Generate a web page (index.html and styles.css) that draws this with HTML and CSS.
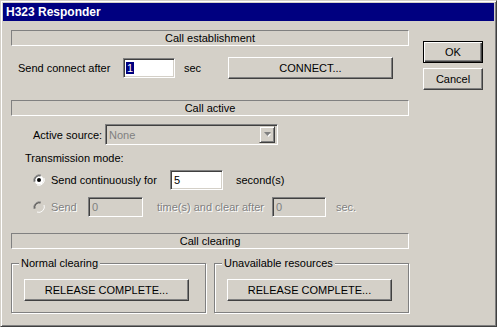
FILE: index.html
```html
<!DOCTYPE html>
<html lang="en">
<head>
    <meta charset="UTF-8">
    <title>H323 Responder</title>
    <link rel="stylesheet" href="styles.css">
</head>
<body>
    <div class="window">
        <div class="titlebar">H323 Responder</div>
        <div class="main">
            <div class="left">
                <div class="bar first">Call establishment</div>
                <div class="row row-connect">
                    <span class="lbl w-connect">Send connect after</span>
                    <div class="field w52"><span class="sel">1</span></div>
                    <span class="lbl unit">sec</span>
                    <button class="btn w165">CONNECT...</button>
                </div>

                <div class="bar second">Call active</div>
                <div class="row row-source">
                    <span class="lbl w-source">Active source:</span>
                    <div class="combo">
                        <span class="combo-text">None</span>
                        <span class="combo-btn">
                            <svg width="7" height="5" viewBox="0 0 7 5"><path d="M1 1h5l-2.5 3z" fill="#fff" transform="translate(1 1)"/><path d="M0 0h7l-3.5 4z" fill="#808080"/></svg>
                        </span>
                    </div>
                </div>
                <div class="caption">Transmission mode:</div>
                <div class="row row-radio">
                    <svg class="radio" width="12" height="12" viewBox="0 0 12 12">
                        <path d="M8 1.1A5.5 5.5 0 0 0 1.1 8" stroke="#808080" fill="none"/>
                        <path d="M11 4A5.5 5.5 0 0 1 4 11" stroke="#fff" fill="none"/>
                        <circle cx="6" cy="6" r="4.5" fill="#fff"/>
                        <path d="M7.5 1.9A4.5 4.5 0 0 0 1.9 7.5" stroke="#404040" fill="none"/>
                        <circle cx="6" cy="6" r="2" fill="#000"/>
                    </svg>
                    <span class="lbl w-cont">Send continuously for</span>
                    <div class="field w53">5</div>
                    <span class="lbl unit2">second(s)</span>
                </div>
                <div class="row row-radio2">
                    <svg class="radio" width="12" height="12" viewBox="0 0 12 12">
                        <path d="M8 1.1A5.5 5.5 0 0 0 1.1 8" stroke="#808080" fill="none"/>
                        <path d="M11 4A5.5 5.5 0 0 1 4 11" stroke="#fff" fill="none"/>
                        <circle cx="6" cy="6" r="4.5" fill="#d4d0c8"/>
                        <path d="M7.5 1.9A4.5 4.5 0 0 0 1.9 7.5" stroke="#404040" fill="none"/>
                    </svg>
                    <span class="lbl off w-send">Send</span>
                    <div class="field off-field w55">0</div>
                    <span class="lbl off w-times">time(s) and clear after</span>
                    <div class="field off-field w54">0</div>
                    <span class="lbl off unit3">sec.</span>
                </div>

                <div class="bar third">Call clearing</div>
                <div class="groups">
                    <div class="group">
                        <span class="legend">Normal clearing</span>
                        <button class="btn w165">RELEASE COMPLETE...</button>
                    </div>
                    <div class="group">
                        <span class="legend">Unavailable resources</span>
                        <button class="btn w165">RELEASE COMPLETE...</button>
                    </div>
                </div>
            </div>
            <div class="right">
                <button class="btn default">OK</button>
                <button class="btn cancel">Cancel</button>
            </div>
        </div>
    </div>
</body>
</html>
```

FILE: styles.css
```css
body {
    margin: 0;
    background-color: #d4d0c8;
    font-family: "Liberation Sans", Arial, sans-serif;
    font-size: 11px;
    color: #000;
}
.window {
    width: 497px;
    height: 327px;
    box-sizing: border-box;
    border: 1px solid;
    border-color: #d4d0c8 #404040 #404040 #d4d0c8;
    box-shadow: inset 1px 1px #fff, inset -1px -1px #808080;
    padding: 2px;
    background-color: #d4d0c8;
}
.titlebar {
    height: 18px;
    line-height: 18px;
    background-color: #000080;
    color: #fff;
    font-weight: bold;
    font-size: 12px;
    padding-left: 3px;
}
.main {
    display: flex;
    padding-left: 8px;
}
.left {
    width: 398px;
}
.right {
    margin-left: 14px;
    padding-top: 20px;
    display: flex;
    flex-direction: column;
}

/* section headers */
.bar {
    height: 16px;
    box-sizing: border-box;
    border: 1px solid;
    border-color: #808080 #fff #fff #808080;
    text-align: center;
    line-height: 14px;
}
.bar.first { margin-top: 9px; }
.bar.second { margin-top: 21px; }
.bar.third { margin-top: 16px; }

.row {
    display: flex;
    align-items: center;
}
.lbl { white-space: nowrap; }
.row-connect {
    height: 22px;
    margin-top: 11px;
    padding-left: 7px;
}
.w-connect { width: 105px; }
.unit { margin-left: 9px; width: 44px; }

.row-source {
    height: 21px;
    margin-top: 8px;
    padding-left: 22px;
}
.w-source { width: 72px; }
.caption {
    margin-top: 7px;
    padding-left: 14px;
    line-height: 13px;
}
.row-radio {
    height: 20px;
    margin-top: 5px;
    padding-left: 22px;
}
.row-radio2 {
    height: 20px;
    margin-top: 7px;
    padding-left: 22px;
}
.radio { flex: none; }
.w-cont { margin-left: 6px; width: 119px; }
.unit2 { margin-left: 13px; }
.w-send { margin-left: 6px; width: 37px; }
.w-times { margin-left: 14px; width: 115px; }
.unit3 { margin-left: 10px; }

.off {
    color: #808080;
    text-shadow: 1px 1px 0 #fff;
}

/* sunken edit boxes */
.field {
    height: 20px;
    box-sizing: border-box;
    border: 1px solid;
    border-color: #808080 #fff #fff #808080;
    box-shadow: inset 1px 1px #404040, inset -1px -1px #d4d0c8;
    background-color: #fff;
    padding: 2px 3px;
    line-height: 14px;
    flex: none;
}
.off-field {
    background-color: #d4d0c8;
    color: #808080;
}
.sel {
    background-color: #000080;
    color: #fff;
    padding: 0 1px;
    margin-left: -1px;
}
.w52 { width: 52px; }
.w53 { width: 53px; }
.w54 { width: 54px; }
.w55 { width: 55px; }

.combo {
    width: 173px;
    height: 21px;
    box-sizing: border-box;
    border: 1px solid;
    border-color: #808080 #fff #fff #808080;
    box-shadow: inset 1px 1px #404040, inset -1px -1px #d4d0c8;
    display: flex;
    align-items: center;
    justify-content: space-between;
    padding: 2px;
}
.combo-text {
    color: #808080;
    padding-left: 1px;
}
.combo-btn {
    width: 16px;
    height: 17px;
    box-sizing: border-box;
    border: 1px solid;
    border-color: #d4d0c8 #404040 #404040 #d4d0c8;
    box-shadow: inset 1px 1px #fff, inset -1px -1px #808080;
    display: flex;
    align-items: center;
    justify-content: center;
}

/* push buttons */
.btn {
    font-family: inherit;
    font-size: 11px;
    color: #000;
    background-color: #d4d0c8;
    height: 22px;
    box-sizing: border-box;
    border: 1px solid;
    border-color: #fff #404040 #404040 #fff;
    box-shadow: inset -1px -1px #808080;
    padding: 0;
    flex: none;
}
.w165 { width: 165px; margin-left: auto; }
.row-connect .w165 { margin-left: 0; }
.default {
    width: 60px;
    border: 1px solid #000;
    box-shadow: inset 1px 1px #fff, inset -1px -1px #404040, inset -2px -2px #808080;
}
.cancel {
    width: 60px;
    margin-top: 5px;
}

/* group boxes */
.groups {
    display: flex;
    gap: 8px;
    margin-top: 14px;
}
.group {
    position: relative;
    width: 195px;
    height: 50px;
    box-sizing: border-box;
    border: 1px solid #808080;
    box-shadow: inset 1px 1px #fff, 1px 1px #fff;
    padding: 15px 0 0 12px;
}
.group .btn { margin-left: 0; display: block; }
.legend {
    position: absolute;
    top: -7px;
    left: 7px;
    padding: 0 2px;
    line-height: 13px;
    background-color: #d4d0c8;
}
```
